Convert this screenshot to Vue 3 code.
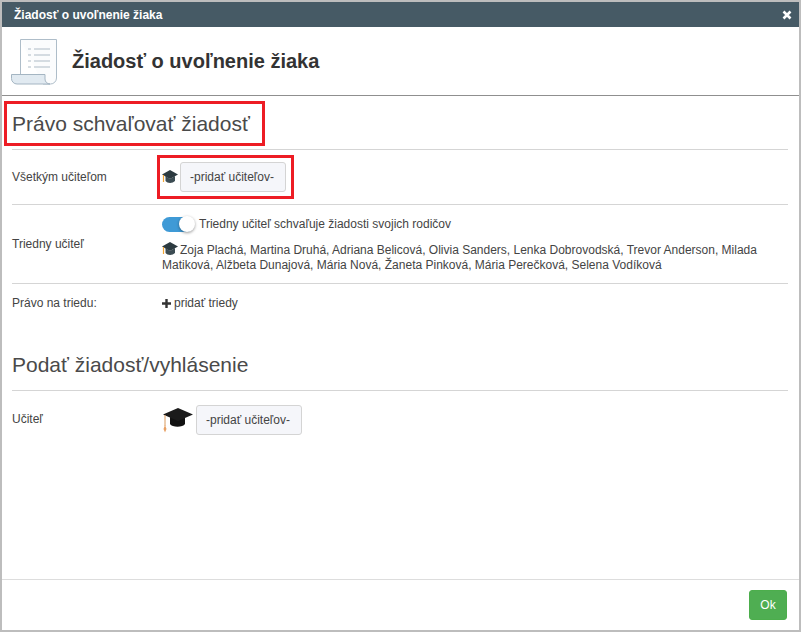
<template>
  <div class="dialog">
    <header class="titlebar">
      <span class="titletext">Žiadosť o uvoľnenie žiaka</span>
      <svg class="close" viewBox="0 0 10 10" width="10" height="10"><path d="M1.500 1.500 8.500 8.500M8.500 1.500 1.500 8.500" stroke="#fff" stroke-width="2.600" fill="none"/></svg>
    </header>
    <div class="head">
      <svg class="doc" width="48" height="48" viewBox="0 0 48 48">
        <path d="M10.500 1.500H46.500V40a6 6 0 0 1-6 6H33" fill="#fbfcfd" stroke="#aebdc9" stroke-width="1"/>
        <path d="M10.500 1.500V36" fill="none" stroke="#aebdc9"/>
        <path d="M1.500 36.500H35V41a5 5 0 0 0 5 5H7a5.500 5.500 0 0 1-5.500-5.500Z" fill="#e1eaf1" stroke="#a4b5c2"/>
        <path d="M18 11h3M24 11h16M18 17h3M24 17h16M18 23h3M24 23h16M18 29h3M24 29h16" stroke="#aebbc6" stroke-width="1"/>
      </svg>
      <h1 class="headtitle">Žiadosť o uvoľnenie žiaka</h1>
    </div>
    <main class="body">
      <h2 class="section first">Právo schvaľovať žiadosť</h2>
      <div class="row row1">
        <div class="label">Všetkým učiteľom</div>
        <div class="value inline">
          <svg class="cap" width="18" height="16" viewBox="0 0 18 16">
            <path d="M3.500 7v5c2 2.600 7 2.600 9.500 0V7L8 10Z" fill="#3c4c53"/>
            <path d="M8 1 0 5.500 8 10l8-4.500Z" fill="#2c3a40"/>
            <path d="M1.500 6v7" stroke="#f0a535" stroke-width="1.200"/>
          </svg>
          <button class="pick">-pridať učiteľov-</button>
        </div>
      </div>
      <div class="row row2">
        <div class="label">Triedny učiteľ</div>
        <div class="value">
          <div class="toggleline">
            <span class="toggle"><span class="knob"></span></span>
            <span>Triedny učiteľ schvaľuje žiadosti svojich rodičov</span>
          </div>
          <p class="names">
            <svg class="cap small" width="18" height="15" viewBox="0 0 18 15">
              <path d="M3.500 7v5c2 2.600 7 2.600 9.500 0V7L8 10Z" fill="#3c4c53"/>
              <path d="M8 1 0 5.500 8 10l8-4.500Z" fill="#2c3a40"/>
              <path d="M1.500 6v7" stroke="#f0a535" stroke-width="1.200"/>
            </svg>Zoja Plachá, Martina Druhá, Adriana Belicová, Olivia Sanders, Lenka Dobrovodská, Trevor Anderson, Milada Matiková, Alžbeta Dunajová, Mária Nová, Žaneta Pinková, Mária Perečková, Selena Vodíková
          </p>
        </div>
      </div>
      <div class="row row3">
        <div class="label">Právo na triedu:</div>
        <div class="value addclass">
          <svg width="9" height="9" viewBox="0 0 9 9"><path d="M4.500 0v9M0 4.500h9" stroke="#333" stroke-width="2.400"/></svg>
          <span>pridať triedy</span>
        </div>
      </div>
      <h2 class="section second">Podať žiadosť/vyhlásenie</h2>
      <div class="row row4">
        <div class="label lift">Učiteľ</div>
        <div class="value inline bigline">
          <svg class="capbig" width="32" height="26" viewBox="0 0 32 26">
            <path d="M8 9v8c2 3.500 13 3.500 15 0V9Z" fill="#111"/>
            <path d="M16 1 1 7.500 16 14l15-6.500Z" fill="#1b1b1b"/>
            <path d="M3 8v11" stroke="#d99a5c" stroke-width="1"/>
            <path d="M3 18l-1.500 4 1.500 3.500L4.500 22Z" fill="#e8a063"/>
          </svg>
          <button class="pick">-pridať učiteľov-</button>
        </div>
      </div>
    </main>
    <footer class="foot"><button class="ok">Ok</button></footer>
    <div class="mark mark1"></div>
    <div class="mark mark2"></div>
  </div>
</template>

<script setup>
</script>

<style>
html, body { margin: 0; background: #fff; }
</style>

<style scoped>
.dialog {
  position: relative;
  box-sizing: border-box;
  width: 801px;
  height: 632px;
  border: 2px solid #bdbdbd;
  display: flex;
  flex-direction: column;
  background: #fff;
  font-family: "Liberation Sans", Arial, sans-serif;
  font-size: 12px;
  color: #444;
  overflow: hidden;
}
.titlebar {
  height: 25px;
  flex: none;
  background: #465a65;
  color: #fff;
  display: flex;
  align-items: center;
  justify-content: space-between;
  padding: 0 7px 0 12px;
}
.titletext { font-size: 12px; font-weight: 700; }
.close { margin-top: 1px; }
.head {
  height: 68px;
  flex: none;
  border-bottom: 1px solid #8f8f8f;
  display: flex;
  align-items: center;
  padding-left: 8px;
  gap: 14px;
}
.doc { margin-top: 1px; }
.headtitle {
  margin: 0;
  font-size: 20px;
  font-weight: 700;
  color: #333;
}
.body { flex: 1; padding: 0 11px 0 10px; }
.section {
  margin: 0;
  font-size: 21px;
  font-weight: 400;
  color: #4a4a4a;
  border-bottom: 1px solid #d5d5d5;
}
.first { height: 53px; line-height: 56px; }
.second { margin-top: 0; height: 68px; line-height: 85px; }
.row {
  display: grid;
  grid-template-columns: 150px 1fr;
  align-items: center;
  border-bottom: 1px solid #d5d5d5;
}
.row1 { height: 54px; }
.row2 { height: 78px; }
.row3 { height: 38px; border-bottom: 0; }
.row4 { height: 58px; border-bottom: 0; }
.lift { padding-bottom: 2px; }
.inline { display: flex; align-items: center; }
.bigline { gap: 2px; }
.pick {
  height: 30px;
  width: 106px;
  padding: 0 2px 0 0;
  border: 1px solid #d4d4d4;
  border-radius: 3px;
  background: #f5f6fa;
  color: #444;
  font: 12px "Liberation Sans", Arial, sans-serif;
}
.toggleline { display: flex; align-items: center; gap: 5px; padding-top: 1px; }
.toggle {
  position: relative;
  display: block;
  width: 32px;
  height: 15px;
  border-radius: 8px;
  background: #3f9ad6;
}
.knob {
  position: absolute;
  right: -1px;
  top: -1px;
  width: 16px;
  height: 16px;
  border-radius: 50%;
  background: #fff;
  box-shadow: 0 1px 3px rgba(0,0,0,.4);
}
.names { margin: 9px 0 0; line-height: 15px; }
.names .small { vertical-align: -2px; }
.addclass { display: flex; align-items: center; gap: 3px; }
.foot {
  height: 50px;
  flex: none;
  border-top: 1px solid #ddd;
  display: flex;
  align-items: center;
  justify-content: flex-end;
  padding-right: 12px;
}
.ok {
  width: 38px;
  height: 30px;
  border: 1px solid #4cae4c;
  border-radius: 3px;
  background: #4fae52;
  color: #fff;
  font: 12px "Liberation Sans", Arial, sans-serif;
  padding: 0;
}
.mark {
  position: absolute;
  box-sizing: border-box;
  border: 3px solid #ed1c24;
}
.mark1 { left: 2px; top: 99px; width: 261px; height: 45px; }
.mark2 { left: 155px; top: 153px; width: 137px; height: 44px; }
</style>
